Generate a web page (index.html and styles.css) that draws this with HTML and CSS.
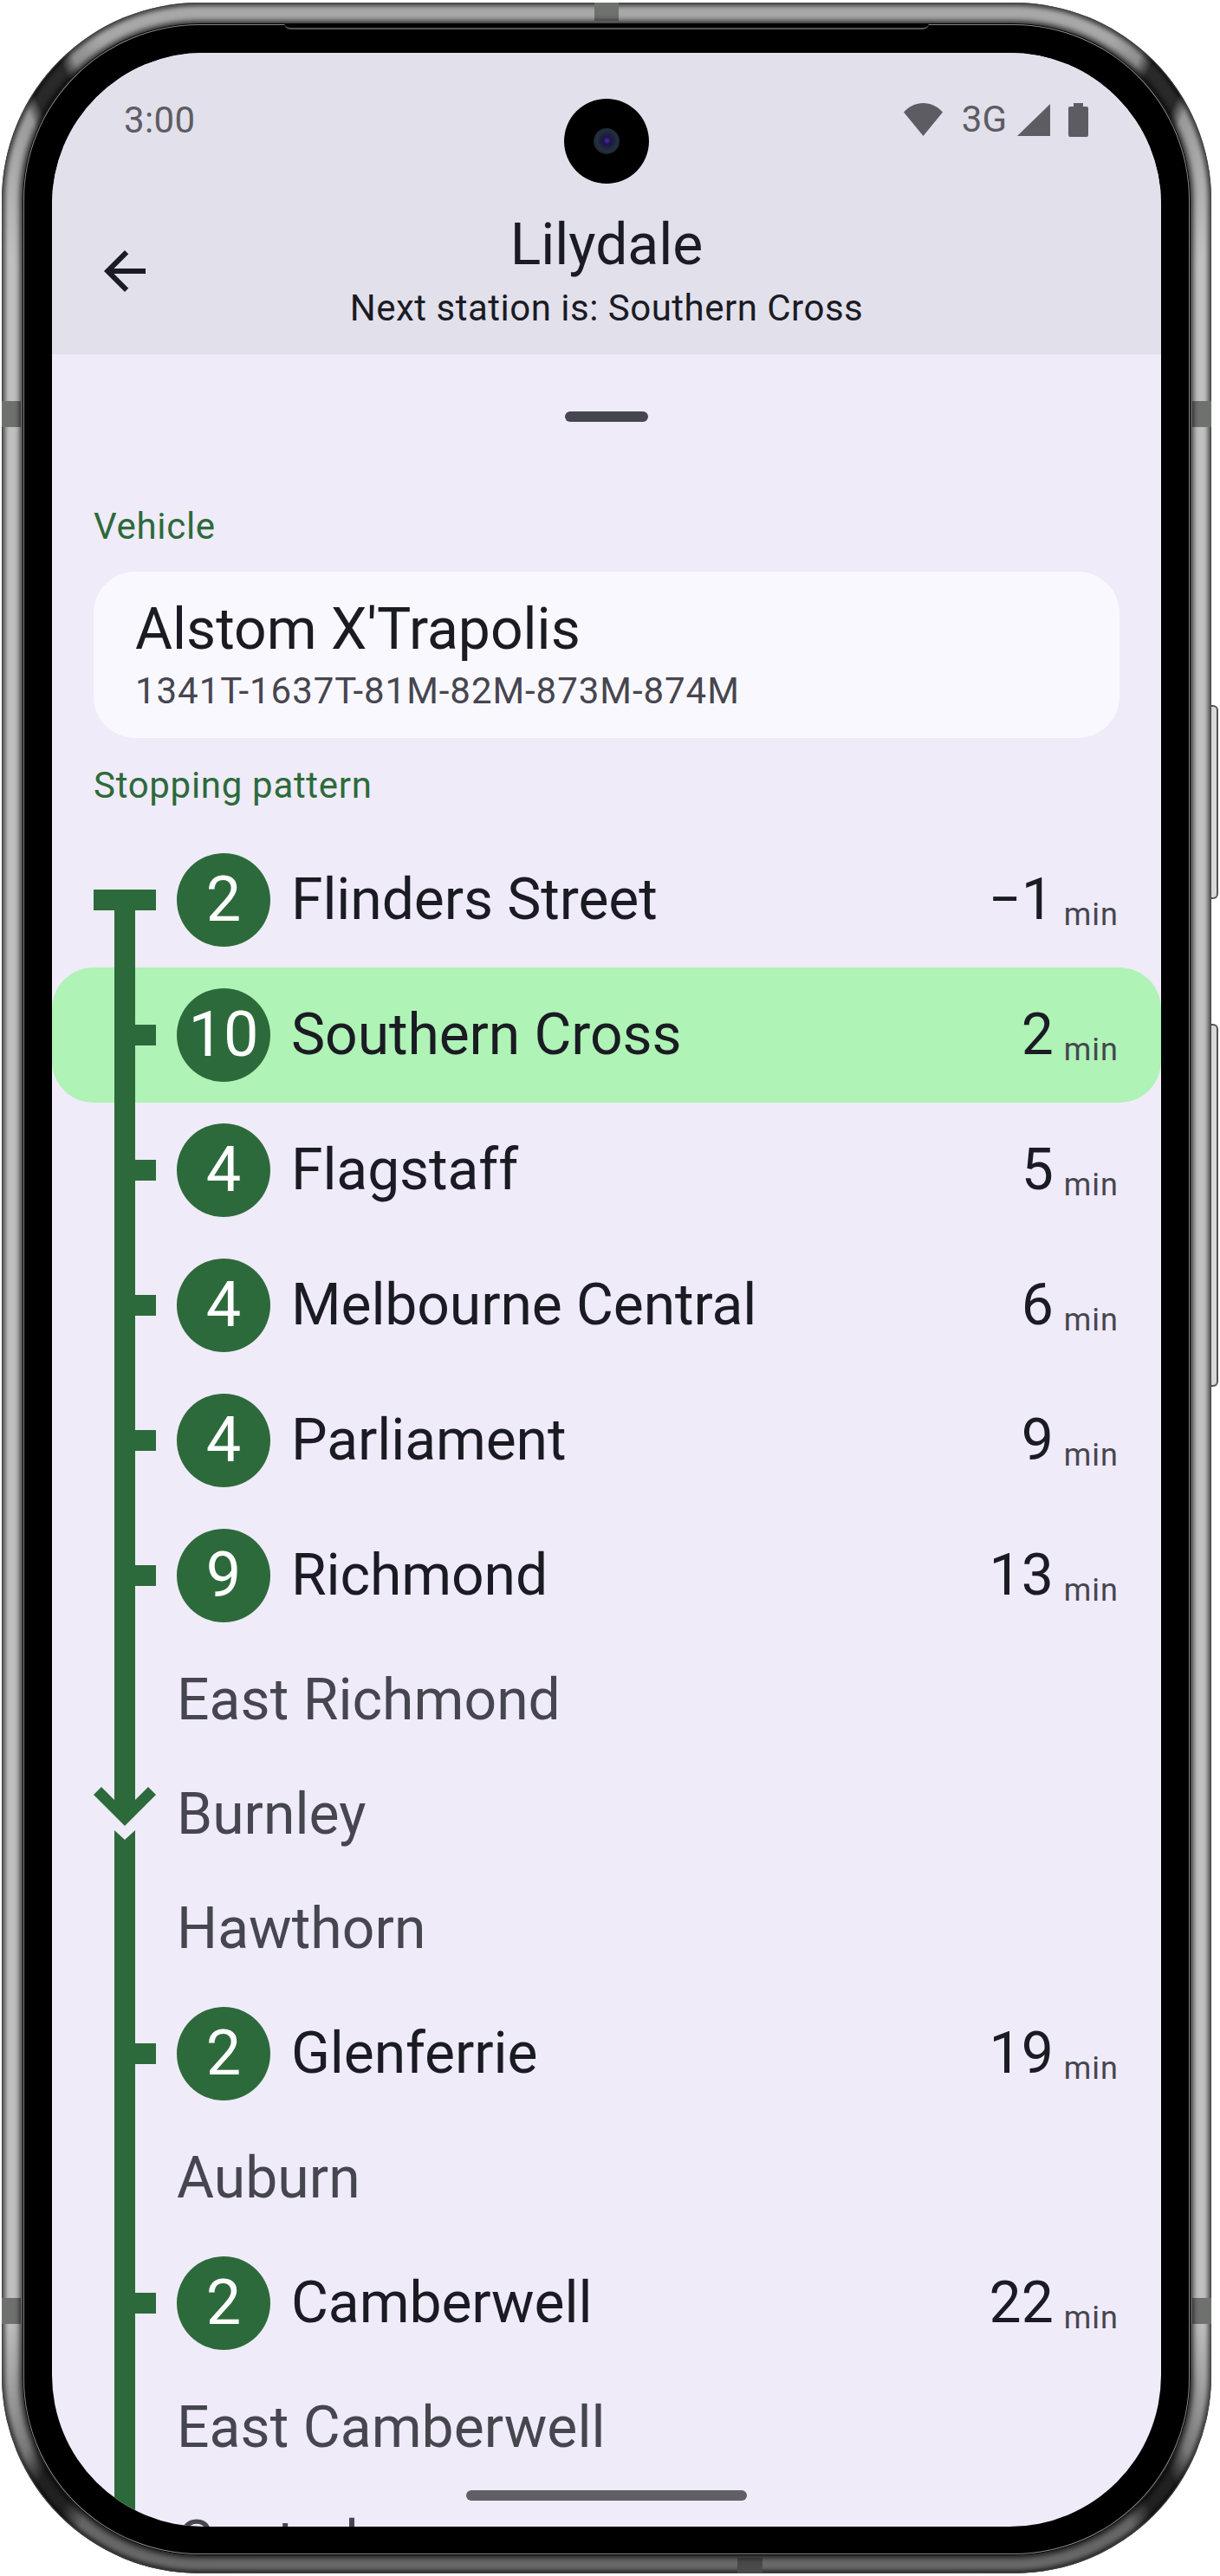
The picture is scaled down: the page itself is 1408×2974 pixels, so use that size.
FILE: index.html
```html
<!DOCTYPE html>
<html lang="en">
<head>
  <meta charset="UTF-8">
  <title>Lilydale</title>
  <link rel="stylesheet" href="styles.css">
</head>
<body>
<div class="device">
  <div class="band band-top"></div>
  <div class="band band-bottom"></div>
  <div class="band band-side band-left band-upper"></div>
  <div class="band band-side band-right band-upper"></div>
  <div class="band band-side band-left band-lower"></div>
  <div class="band band-side band-right band-lower"></div>
  <div class="side-btn btn-power"></div>
  <div class="side-btn btn-volume"></div>

  <div class="bezel">
    <div class="notch"></div>
    <div class="screen">
      <div class="camera"><div class="lens"></div></div>

      <header class="appbar">
        <div class="status">
          <span class="clock">3:00</span>
          <div class="status-icons">
            <svg class="ic-wifi" width="45" height="38" viewBox="0 0 45 38"><path d="M22.5 38L0 10.5C6 4 14 0 22.5 0S39 4 45 10.5Z"/></svg>
            <span class="net">3G</span>
            <svg class="ic-signal" width="38" height="37" viewBox="0 0 38 37"><path d="M38 0V37H0Z"/></svg>
            <svg class="ic-battery" width="23" height="39" viewBox="0 0 23 39"><path d="M6 0H17V4H21A2 2 0 0 1 23 6V37A2 2 0 0 1 21 39H2A2 2 0 0 1 0 37V6A2 2 0 0 1 2 4H6Z"/></svg>
          </div>
        </div>
        <div class="titlebar">
          <svg class="back" width="72" height="72" viewBox="0 0 24 24"><path d="M20 11H7.83l5.59-5.59L12 4l-8 8 8 8 1.41-1.41L7.83 13H20v-2z"/></svg>
          <div class="titles">
            <h1>Lilydale</h1>
            <p>Next station is: Southern Cross</p>
          </div>
        </div>
      </header>

      <div class="handle"></div>

      <section class="details">
        <h2 class="label label-vehicle">Vehicle</h2>
        <div class="card">
          <div class="card-title">Alstom X'Trapolis</div>
          <div class="card-sub">1341T-1637T-81M-82M-873M-874M</div>
        </div>
        <h2 class="label label-pattern">Stopping pattern</h2>
      </section>

      <div class="stops">
        <div class="stop">
          <div class="rail rail-start"><span class="tick tick-wide"></span></div>
          <span class="platform">2</span>
          <span class="name">Flinders Street</span>
          <span class="eta">−1<span class="unit">min</span></span>
        </div>
        <div class="stop stop-next">
          <div class="rail"><span class="tick"></span></div>
          <span class="platform">10</span>
          <span class="name">Southern Cross</span>
          <span class="eta">2<span class="unit">min</span></span>
        </div>
        <div class="stop">
          <div class="rail"><span class="tick"></span></div>
          <span class="platform">4</span>
          <span class="name">Flagstaff</span>
          <span class="eta">5<span class="unit">min</span></span>
        </div>
        <div class="stop">
          <div class="rail"><span class="tick"></span></div>
          <span class="platform">4</span>
          <span class="name">Melbourne Central</span>
          <span class="eta">6<span class="unit">min</span></span>
        </div>
        <div class="stop">
          <div class="rail"><span class="tick"></span></div>
          <span class="platform">4</span>
          <span class="name">Parliament</span>
          <span class="eta">9<span class="unit">min</span></span>
        </div>
        <div class="stop">
          <div class="rail"><span class="tick"></span></div>
          <span class="platform">9</span>
          <span class="name">Richmond</span>
          <span class="eta">13<span class="unit">min</span></span>
        </div>
        <div class="stop stop-skip">
          <div class="rail"></div>
          <span class="name">East Richmond</span>
        </div>
        <div class="stop stop-skip">
          <div class="rail rail-arrow">
            <svg width="72" height="132" viewBox="0 0 72 132"><path d="M24 0H48V49L63 34L72 43L36 79L0 43L9 34L24 49Z"/><path d="M24 84L36 95L48 84V132H24Z"/></svg>
          </div>
          <span class="name">Burnley</span>
        </div>
        <div class="stop stop-skip">
          <div class="rail"></div>
          <span class="name">Hawthorn</span>
        </div>
        <div class="stop">
          <div class="rail"><span class="tick"></span></div>
          <span class="platform">2</span>
          <span class="name">Glenferrie</span>
          <span class="eta">19<span class="unit">min</span></span>
        </div>
        <div class="stop stop-skip">
          <div class="rail"></div>
          <span class="name">Auburn</span>
        </div>
        <div class="stop">
          <div class="rail"><span class="tick"></span></div>
          <span class="platform">2</span>
          <span class="name">Camberwell</span>
          <span class="eta">22<span class="unit">min</span></span>
        </div>
        <div class="stop stop-skip">
          <div class="rail"></div>
          <span class="name">East Camberwell</span>
        </div>
        <div class="stop stop-skip">
          <div class="rail"></div>
          <span class="name">Canterbury</span>
        </div>
      </div>

      <div class="home-bar"></div>
    </div>
  </div>
</div>
</body>
</html>
```

FILE: styles.css
```css
html, body {
  margin: 0;
  background-color: #fff;
}
body {
  width: 1408px;
  height: 2974px;
  padding: 3px 0 0 2px;
  box-sizing: border-box;
  overflow: hidden;
  font-family: Roboto, "Liberation Sans", sans-serif;
  color: #1a1b23;
}

/* phone frame */
.device {
  position: relative;
  width: 1396px;
  height: 2968px;
  box-sizing: border-box;
  padding: 24px 24px 21px;
  border-radius: 228px;
  background: conic-gradient(from 0deg,
    #a8a8a8 0deg, #a8a8a8 22deg, #8d8d8d 23.4deg, #2a2a2a 24deg, #2a2a2a 25.6deg, #9a9a9a 26.2deg, #c0c0c0 30deg,
    #c0c0c0 150deg, #777 153.5deg, #222 154.6deg, #222 156deg, #666 157deg, #6a6a6a 165deg,
    #6a6a6a 195deg, #666 203deg, #222 204deg, #222 205.4deg, #777 206.5deg, #c0c0c0 210deg,
    #c0c0c0 330deg, #9a9a9a 333.8deg, #2a2a2a 334.4deg, #2a2a2a 336deg, #8d8d8d 336.6deg, #a8a8a8 338deg);
  box-shadow: inset 0 0 0 1px #444, inset 0 0 5px 4px rgba(0,0,0,0.6);
}
.band {
  position: absolute;
  background-color: #6e716e;
}
.band-top {
  left: 684px;
  top: 0;
  width: 28px;
  height: 21px;
}
.band-bottom {
  left: 849px;
  bottom: 0;
  width: 29px;
  height: 18px;
  background-color: #4a4a4a;
}
.band-side {
  width: 22px;
  height: 30px;
}
.band-left {
  left: 0;
}
.band-right {
  right: 0;
}
.band-upper {
  top: 460px;
}
.band-lower {
  top: 2650px;
}
.side-btn {
  position: absolute;
  left: 1396px;
  width: 8px;
  box-sizing: border-box;
  background-color: #d8d8d8;
  border: 2px solid #555;
  border-left: none;
  border-radius: 0 6px 6px 0;
}
.btn-power {
  top: 811px;
  height: 224px;
}
.btn-volume {
  top: 1179px;
  height: 419px;
}
.bezel {
  position: relative;
  padding: 34px 34px 33px;
  border-radius: 204px;
  background-color: #000;
  box-shadow: inset 0 0 0 1px #000, inset 0 0 0 2px #8a8a8a, 0 0 6px 3px rgba(0,0,0,0.75);
}
.notch {
  position: absolute;
  left: 302px;
  top: 0;
  width: 744px;
  height: 7px;
  box-sizing: border-box;
  background-color: #000;
  border-bottom: 2px solid #555;
  border-radius: 0 0 8px 8px;
}
.screen {
  position: relative;
  width: 1280px;
  height: 2856px;
  overflow: hidden;
  border-radius: 175px;
  background-color: #efebf8;
}

/* punch hole */
.camera {
  position: absolute;
  left: 591px;
  top: 53px;
  width: 98px;
  height: 98px;
  display: flex;
  align-items: center;
  justify-content: center;
  border-radius: 50%;
  background: radial-gradient(circle, #000 0, #000 70%, #121212 71%, #0f0f0f 97%, #000 100%);
}
.lens {
  width: 30px;
  height: 30px;
  border-radius: 50%;
  background: radial-gradient(circle at 52% 48%, #4a2cc0 0, #1c1540 20%, #223040 55%, #1c2228 76%, #6a6e70 88%, #2a2a2a 100%);
}

/* app bar */
.appbar {
  height: 348px;
  background-color: #e2e0eb;
}
.status {
  height: 154px;
  margin-bottom: 26px;
  padding: 0 84px 0 83px;
  display: flex;
  align-items: center;
  justify-content: space-between;
  color: #5d5c62;
}
.clock {
  font-size: 42px;
  letter-spacing: 0.4px;
}
.status-icons {
  display: flex;
  align-items: center;
}
.status-icons svg {
  display: block;
  fill: #5d5c62;
}
.net {
  margin: 0 12px 0 22px;
  font-size: 42px;
  line-height: 42px;
}
.ic-battery {
  margin-left: 21px;
}
.titlebar {
  display: flex;
  align-items: flex-start;
  padding-left: 48px;
}
.back {
  flex: none;
  margin-top: 36px;
  fill: #1a1b23;
}
.titles {
  width: 1040px;
  text-align: center;
}
.titles h1 {
  margin: 0;
  font-size: 66px;
  line-height: 84px;
  font-weight: 400;
}
.titles p {
  margin: 0;
  font-size: 42px;
  line-height: 62px;
  letter-spacing: 0.5px;
}

.handle {
  width: 96px;
  height: 12px;
  margin: 66px auto 0;
  border-radius: 6px;
  background-color: #46464f;
}

.details {
  padding: 0 48px;
}
.label {
  margin: 0;
  font-size: 42px;
  line-height: 60px;
  font-weight: 400;
  letter-spacing: 0.7px;
  color: #2d6a3b;
}
.label-vehicle {
  margin-top: 91px;
}
.label-pattern {
  margin-top: 25px;
  margin-bottom: 24px;
}
.card {
  margin-top: 22px;
  padding: 24px 48px 26px;
  border-radius: 48px;
  background-color: #faf8ff;
}
.card-title {
  font-size: 66px;
  line-height: 86px;
}
.card-sub {
  font-size: 42px;
  line-height: 56px;
  letter-spacing: 0.95px;
  color: #46464f;
}

/* stopping pattern */
.stop {
  height: 156px;
  padding: 0 48px;
  display: flex;
  align-items: center;
}
.stop-next {
  border-radius: 48px;
  background-color: #aff3b6;
}
.stop-skip {
  height: 132px;
}
.rail {
  flex: none;
  width: 72px;
  margin-right: 24px;
  align-self: stretch;
  display: flex;
  align-items: center;
  justify-content: flex-end;
  background: linear-gradient(#2d6a3b, #2d6a3b) center / 24px 100% no-repeat;
}
.rail-start {
  background-position: center bottom;
  background-size: 24px calc(50% + 12px);
}
.rail-arrow {
  background: none;
}
.rail-arrow svg {
  display: block;
  fill: #2d6a3b;
}
.tick {
  width: 24px;
  height: 24px;
  background-color: #2d6a3b;
}
.tick-wide {
  width: 72px;
}
.platform {
  flex: none;
  width: 108px;
  height: 108px;
  margin-right: 24px;
  border-radius: 50%;
  background-color: #2d6a3b;
  color: #fff;
  font-size: 72px;
  line-height: 108px;
  text-align: center;
}
.name {
  font-size: 66px;
  line-height: 84px;
  letter-spacing: -0.1px;
}
.stop-skip .name {
  letter-spacing: 0.05px;
  color: #46464f;
}
.eta {
  margin-left: auto;
  padding-right: 1px;
  font-size: 66px;
  line-height: 84px;
  white-space: nowrap;
}
.unit {
  margin-left: 12px;
  font-size: 36px;
  line-height: 0;
  letter-spacing: 1px;
  vertical-align: -7px;
  color: #46464f;
}
.home-bar {
  position: absolute;
  left: 478px;
  bottom: 30px;
  width: 324px;
  height: 12px;
  border-radius: 6px;
  background-color: #605f66;
}
```
